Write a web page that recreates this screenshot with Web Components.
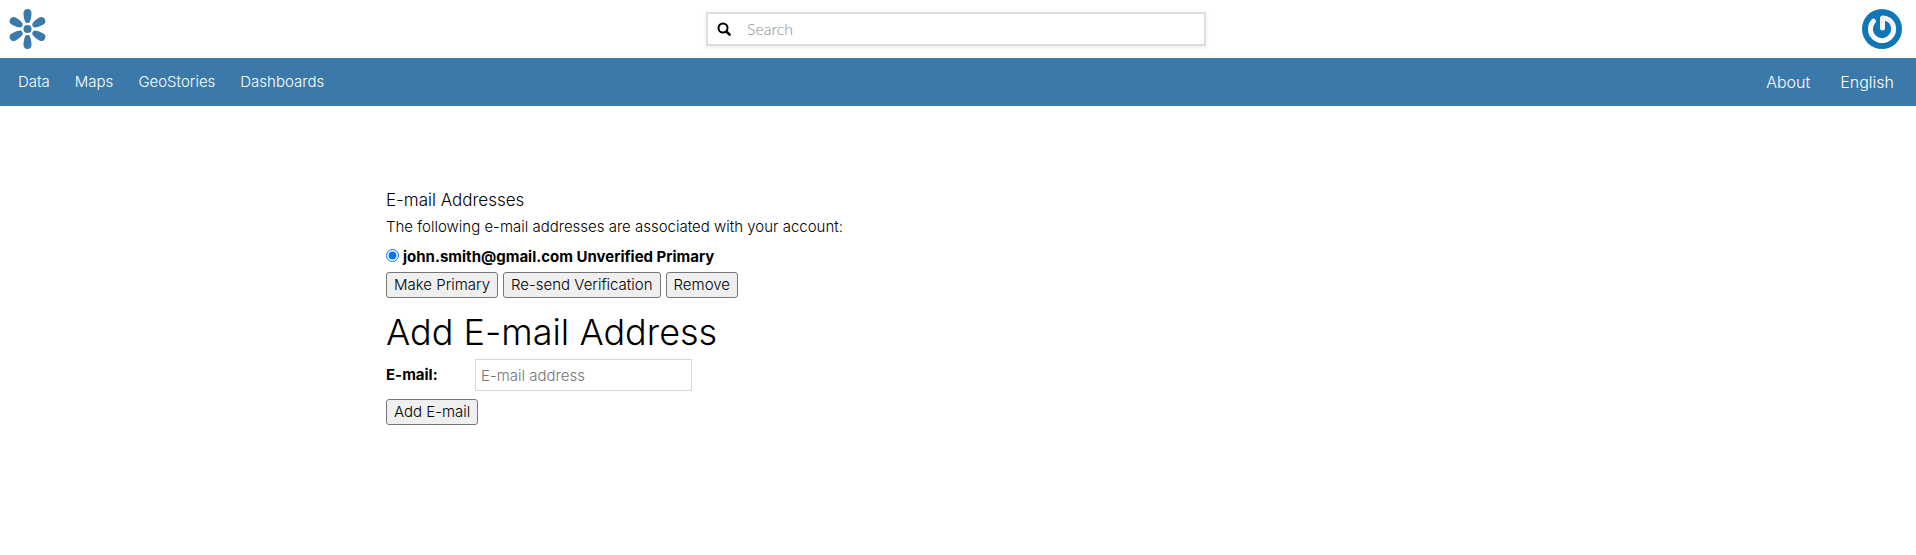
<!DOCTYPE html>
<html lang="en">
<head>
<meta charset="utf-8">
<meta name="viewport" content="width=device-width, initial-scale=1">
<title>E-mail Addresses</title>
<style>
body { margin: 0; background: #fff; color: #000; font: 300 15px/20px "Inter", sans-serif; }
</style>
</head>
<body>
<site-header>
  <brand-logo slot="brand"></brand-logo>
  <site-search></site-search>
  <user-avatar slot="user"></user-avatar>
</site-header>
<site-nav>
  <nav-link href="#data">Data</nav-link>
  <nav-link href="#maps">Maps</nav-link>
  <nav-link href="#geostories">GeoStories</nav-link>
  <nav-link href="#dashboards">Dashboards</nav-link>
  <nav-link slot="end" href="#about">About</nav-link>
  <nav-link slot="end" href="#language">English</nav-link>
</site-nav>
<page-content>
  <email-list address="john.smith@gmail.com"></email-list>
  <email-add></email-add>
</page-content>

<script>
const define = (name, markup, setup) => {
  const template = document.createElement('template');
  template.innerHTML = markup;
  customElements.define(name, class extends HTMLElement {
    constructor() {
      super();
      this.attachShadow({ mode: 'open' }).append(template.content.cloneNode(true));
    }
    connectedCallback() {
      if (setup) setup(this, this.shadowRoot);
    }
  });
};

const buttonStyle = `
  button { box-sizing: border-box; height: 26px; margin: 0; padding: 0 7px; border: 1px solid #767676;
    border-radius: 3px; background: #efefef; color: #000; font: inherit; line-height: 20px; white-space: nowrap; }`;

const petal = angle => `<path transform="rotate(${angle} 20 21)"
  d="M20 1c2.7 0 4 1.700 4 4 0 4-.8 7-1.800 9-.9 1.400-3.500 1.400-4.400 0-1-2-1.800-5-1.800-9 0-2.300 1.300-4 4-4z"/>`;

define('site-header', `
<style>
:host { display: block; }
header { display: grid; grid-template-columns: 1fr minmax(0, 500px) 1fr; align-items: center;
  box-sizing: border-box; height: 58px; padding-right: 4px; }
.user { justify-self: end; }
</style>
<header><slot name="brand"></slot><slot></slot><div class="user"><slot name="user"></slot></div></header>`);

define('brand-logo', `
<style>
:host { display: block; padding-left: 8px; }
a { display: block; width: 40px; height: 42px; }
svg { display: block; }
</style>
<a href="#home" aria-label="Home">
<svg width="40" height="42" viewBox="0.500 0 40 42" fill="#3a79aa">
  <circle cx="20" cy="21" r="4"/>
  ${[0, 60, 120, 180, 240, 300].map(petal).join('')}
</svg></a>`);

define('site-search', `
<style>
:host { display: block; }
form { display: flex; align-items: center; box-sizing: border-box; height: 34px; border: 2px solid #ddd;
  background: #fff; box-shadow: 0 2px 4px rgba(0, 0, 0, .08); }
button { display: flex; flex: none; align-items: center; justify-content: center; width: 31px; height: 30px;
  margin: 0; padding: 0; border: 0; background: none; color: #000; }
input { flex: 1; min-width: 0; height: 28px; box-sizing: border-box; margin: 0 0 2px; padding: 0 8px; border: 0;
  outline: 0; background: none; color: #000; font: 300 16px/20px "Lato", sans-serif; }
input::placeholder { color: #8c8c8c; opacity: 1; }
</style>
<form role="search">
  <button type="button" aria-label="Submit search">
    <svg width="14" height="14" viewBox="0 0 14 14" fill="none" stroke="currentColor">
      <circle cx="6" cy="6" r="4.500" stroke-width="2"/><path d="M9.300 9.300l3.200 3.200" stroke-width="2.600" stroke-linecap="round"/>
    </svg>
  </button>
  <input type="text" aria-label="Search" placeholder="Search">
</form>`);

define('user-avatar', `
<style>
:host { display: block; padding-right: 8px; }
a { display: block; width: 42px; height: 42px; }
svg { display: block; }
</style>
<a href="#profile" aria-label="Profile">
<svg width="42" height="42" viewBox="0 0 42 42">
  <defs><linearGradient id="ring" x1="0" y1="0" x2="0" y2="1"><stop offset="0" stop-color="#f1f1f1"/><stop offset="1" stop-color="#fff"/></linearGradient></defs>
  <circle cx="20" cy="21" r="20" fill="#0f77b8"/>
  <g fill="none" stroke-linecap="round" stroke-linejoin="round" stroke-width="5">
    <path d="M11.500 13.200A11.600 11.600 0 1 0 27.500 12.200Q24.500 9.800 20.500 10V20" stroke="#0a5b90" transform="translate(0 1)" opacity=".5"/>
    <path d="M11.500 13.200A11.600 11.600 0 1 0 27.500 12.200Q24.500 9.800 20.500 10V20" stroke="url(#ring)"/>
  </g>
</svg></a>`);

define('site-nav', `
<style>
:host { display: block; background: #3a79aa; color: #fff; }
nav { display: flex; align-items: center; justify-content: space-between; box-sizing: border-box;
  height: 48px; padding: 0 22px 0 18px; }
div { display: flex; gap: 25px; }
.end { gap: 30px; font-size: 16px; }
</style>
<nav aria-label="Main"><div><slot></slot></div><div class="end"><slot name="end"></slot></div></nav>`);

define('nav-link', `
<style>
:host { display: block; }
a { color: inherit; text-decoration: none; }
</style>
<a><slot></slot></a>`, (host, root) => {
  root.querySelector('a').href = host.getAttribute('href');
});

define('page-content', `
<style>
:host { display: block; }
main { box-sizing: border-box; max-width: 1144px; margin: 0 auto; padding: 84px 0 48px; }
</style>
<main><slot></slot></main>`);

define('email-list', `
<style>
:host { display: block; }
h2 { margin: 0 0 7px; font-size: 17px; font-weight: 300; line-height: 20px; }
p { margin: 0 0 10px; }
.choice { display: flex; align-items: center; margin-bottom: 5px; font-weight: 700; }
label { line-height: 20px; }
input { width: 13px; height: 13px; margin: 0 4px 3px 0; }
.actions { display: flex; flex-wrap: wrap; gap: 5px; }
${buttonStyle}
</style>
<form>
  <h2>E-mail Addresses</h2>
  <p>The following e-mail addresses are associated with your account:</p>
  <div class="choice">
    <input type="radio" name="email" id="primary" checked>
    <label for="primary"><span class="address"></span> Unverified Primary</label>
  </div>
  <div class="actions">
    <button type="button">Make Primary</button>
    <button type="button">Re-send Verification</button>
    <button type="button">Remove</button>
  </div>
</form>`, (host, root) => {
  root.querySelector('.address').textContent = host.getAttribute('address');
});

define('email-add', `
<style>
:host { display: block; margin-top: 14px; }
h1 { margin: 0 0 7px; font-size: 36px; font-weight: 300; line-height: 40px; }
.field { display: flex; align-items: center; margin-bottom: 8px; }
label { width: 89px; font-weight: 700; }
input { box-sizing: border-box; width: 217px; height: 32px; margin: 0; padding: 0 5px; border: 1px solid #d6d6d6;
  background: #fff; color: #000; font: inherit; }
input::placeholder { color: #757575; opacity: 1; }
${buttonStyle}
</style>
<form>
  <h1>Add E-mail Address</h1>
  <div class="field">
    <label for="email">E-mail:</label>
    <input id="email" type="email" placeholder="E-mail address">
  </div>
  <button type="button">Add E-mail</button>
</form>`);
</script>
</body>
</html>
